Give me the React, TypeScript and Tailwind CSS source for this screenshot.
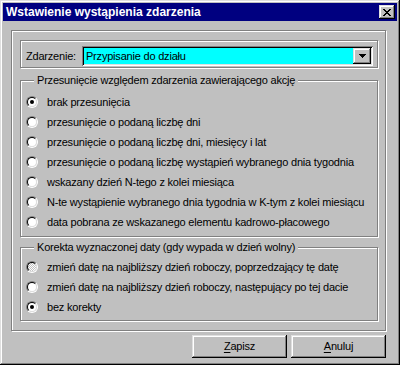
import React from "react";
import clsx from "clsx";

const raised =
  "shadow-[inset_-1px_-1px_#000,inset_1px_1px_#dfdfdf,inset_-2px_-2px_#808080,inset_2px_2px_#fff]";
const etched = "border border-[#808080] shadow-[1px_1px_0_#fff,inset_1px_1px_0_#fff]";

const Radio = ({ checked, disabled }: { checked?: boolean; disabled?: boolean }) => (
  <span className="flex size-3 shrink-0 rounded-full border border-t-[#808080] border-l-[#808080] border-r-white border-b-white">
    <span
      className={clsx(
        "flex flex-1 items-center justify-center rounded-full border border-t-black border-l-black border-r-[#dfdfdf] border-b-[#dfdfdf]",
        disabled
          ? "bg-[repeating-conic-gradient(#c0c0c0_0%_25%,#fff_0%_50%)] bg-[length:2px_2px]"
          : "bg-white"
      )}
    >
      {checked && <span className="size-1 rounded-full bg-black" />}
    </span>
  </span>
);

const Option = ({ label, checked, disabled }: { label: string; checked?: boolean; disabled?: boolean }) => (
  <div className="flex h-5 items-center gap-[9px] pl-[5px]">
    <Radio checked={checked} disabled={disabled} />
    <span className="whitespace-nowrap">{label}</span>
  </div>
);

const Group = ({ title, className, children }: { title: string; className?: string; children: React.ReactNode }) => (
  <div className={clsx("relative flex flex-col", etched, className)}>
    <span className="absolute -top-[7px] left-[13px] bg-[#c0c0c0] px-[3px] leading-[13px] whitespace-nowrap">
      {title}
    </span>
    {children}
  </div>
);

const Button = ({ accel, rest }: { accel: string; rest: string }) => (
  <button className={clsx("flex h-[23px] w-[95px] items-center justify-center bg-[#c0c0c0]", raised)}>
    <span>
      <span className="underline underline-offset-2">{accel}</span>
      {rest}
    </span>
  </button>
);

const shifts = [
  "przesunięcie o podaną liczbę dni",
  "przesunięcie o podaną liczbę dni, miesięcy i lat",
  "przesunięcie o podaną liczbę wystąpień wybranego dnia tygodnia",
  "wskazany dzień N-tego z kolei miesiąca",
  "N-te wystąpienie wybranego dnia tygodnia w K-tym z kolei miesiącu",
  "data pobrana ze wskazanego elementu kadrowo-płacowego",
];

export default function App() {
  return (
    <div
      className="flex h-[365px] w-[400px] flex-col bg-[#c0c0c0] p-[3px] text-[11px] leading-[13px] tracking-[-0.2px] text-black shadow-[inset_-1px_-1px_#000,inset_1px_1px_#dfdfdf,inset_-2px_-2px_#808080,inset_2px_2px_#fff]"
      style={{ fontFamily: '"Liberation Sans", Arial, sans-serif' }}
    >
      {/* title bar */}
      <div className="flex h-[18px] items-center justify-between bg-[#000080] pl-[3px] pr-[2px]">
        <span className="text-[12px] font-bold tracking-normal text-white">Wstawienie wystąpienia zdarzenia</span>
        <div className={clsx("flex h-[14px] w-4 items-center justify-center bg-[#c0c0c0]", raised)}>
          <svg width="8" height="7" viewBox="0 0 8 7" shapeRendering="crispEdges">
            <path
              d="M0 0h2v1H0zM6 0h2v1H6zM1 1h2v1H1zM5 1h2v1H5zM2 2h4v1H2zM3 3h2v1H3zM2 4h4v1H2zM1 5h2v1H1zM5 5h2v1H5zM0 6h2v1H0zM6 6h2v1H6z"
              fill="#000"
            />
          </svg>
        </div>
      </div>

      <div className="flex flex-1 flex-col pl-2 pr-[11px] pt-[9px]">
        {/* main panel */}
        <div className={clsx("flex flex-col pl-2 pr-[7px] pt-[9px] pb-[9px]", etched)}>
          <div className={clsx("flex h-[28px] items-start gap-[6px] pl-[5px] pr-[4px] pt-[5px]", etched)}>
            <span className="pt-[4px]">Zdarzenie:</span>
            <div className="flex h-5 flex-1 shadow-[inset_1px_1px_#808080,inset_-1px_-1px_#fff,inset_2px_2px_#000,inset_-2px_-2px_#dfdfdf] p-[2px]">
              <div className="flex flex-1 items-center bg-[#00ffff] pl-[2px]">Przypisanie do działu</div>
              <div className={clsx("flex w-[18px] items-center justify-center bg-[#c0c0c0]", raised)}>
                <svg width="7" height="4" viewBox="0 0 7 4" shapeRendering="crispEdges">
                  <path d="M0 0h7v1H0zM1 1h5v1H1zM2 2h3v1H2zM3 3h1v1H3z" fill="#000" />
                </svg>
              </div>
            </div>
          </div>

          <Group title="Przesunięcie względem zdarzenia zawierającego akcję" className="mt-3 pt-[11px] pb-1">
            <Option label="brak przesunięcia" checked />
            {shifts.map((s) => (
              <Option key={s} label={s} />
            ))}
          </Group>

          <Group title="Korekta wyznaczonej daty (gdy wypada w dzień wolny)" className="mt-[10px] pt-[9px] pb-[3px]">
            <Option label="zmień datę na najbliższy dzień roboczy, poprzedzający tę datę" disabled />
            <Option label="zmień datę na najbliższy dzień roboczy, następujący po tej dacie" />
            <Option label="bez korekty" checked />
          </Group>
        </div>

        <div className="mt-1 flex justify-end gap-1">
          <Button accel="Z" rest="apisz" />
          <Button accel="A" rest="nuluj" />
        </div>
      </div>
    </div>
  );
}
